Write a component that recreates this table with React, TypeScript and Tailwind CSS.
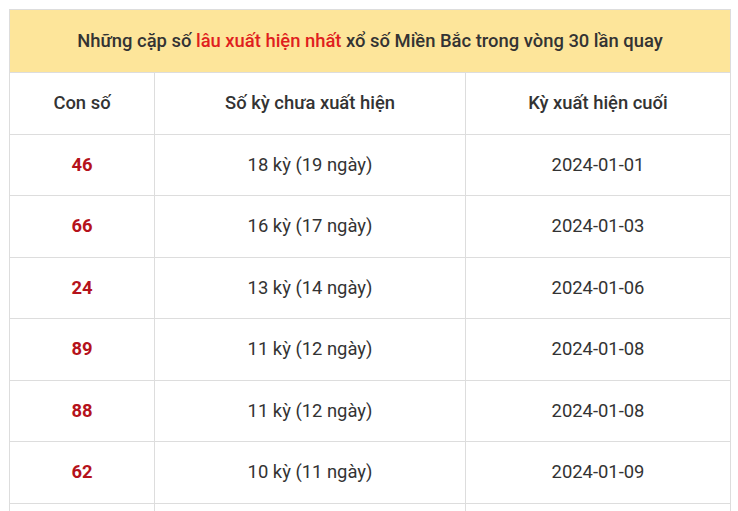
import React from "react";

const rows = [
  { num: "46", ky: "18 kỳ (19 ngày)", last: "2024-01-01" },
  { num: "66", ky: "16 kỳ (17 ngày)", last: "2024-01-03" },
  { num: "24", ky: "13 kỳ (14 ngày)", last: "2024-01-06" },
  { num: "89", ky: "11 kỳ (12 ngày)", last: "2024-01-08" },
  { num: "88", ky: "11 kỳ (12 ngày)", last: "2024-01-08" },
  { num: "62", ky: "10 kỳ (11 ngày)", last: "2024-01-09" },
];

const cell = "border border-[#dddddd] text-center h-[61.5px] p-0";

const App = () => {
  return (
    <div className="bg-white h-screen overflow-hidden pt-[9px] pl-[9px] font-['Roboto',sans-serif] text-[18.4px] text-[#333333]">
      <table className="w-[721px] border-collapse table-fixed">
        <colgroup>
          <col className="w-[145px]" />
          <col className="w-[311px]" />
          <col className="w-[265px]" />
        </colgroup>
        <thead>
          <tr>
            <th colSpan={3} className="border border-[#dddddd] bg-[#fde59a] h-[63px] font-medium text-center">
              Những cặp số <span className="text-[#e01e1e]">lâu xuất hiện nhất</span> xổ số Miền Bắc trong vòng 30 lần quay
            </th>
          </tr>
          <tr>
            <th className={`${cell} font-medium`}>Con số</th>
            <th className={`${cell} font-medium`}>Số kỳ chưa xuất hiện</th>
            <th className={`${cell} font-medium`}>Kỳ xuất hiện cuối</th>
          </tr>
        </thead>
        <tbody>
          {rows.map((r) => (
            <tr key={r.num}>
              <td className={`${cell} font-bold text-[#b5121b]`}>{r.num}</td>
              <td className={cell}>{r.ky}</td>
              <td className={cell}>{r.last}</td>
            </tr>
          ))}
          {/* next row starts at the bottom edge, its text is below the fold */}
          <tr>
            <td className={cell}></td>
            <td className={cell}></td>
            <td className={cell}></td>
          </tr>
        </tbody>
      </table>
    </div>
  );
};

export default App;
